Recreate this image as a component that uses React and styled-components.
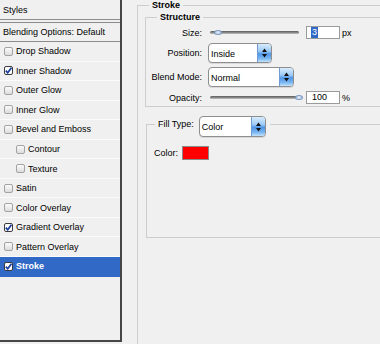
import React from 'react';
import styled, { createGlobalStyle } from 'styled-components';

const Global = createGlobalStyle`
  html, body { margin: 0; padding: 0; background: #f0f0f0; overflow: hidden; }
  body { font-family: "Liberation Sans", Arial, sans-serif; font-size: 9px; color: #000; }
  #root { width: 380px; height: 344px; overflow: hidden; }
`;

const Page = styled.div`
  display: flex;
  align-items: flex-start;
  width: 380px;
  height: 344px;
  overflow: hidden;
  background: #f0f0f0;
`;

/* ---------- left: styles list ---------- */
const StylesPanel = styled.div`
  flex: none;
  width: 120px;
  height: 340px;
  border-right: 2px solid #464646;
  border-bottom: 2px solid #464646;
  display: flex;
  flex-direction: column;
  background: #f0f0f0;
`;

const HeaderRow = styled.div`
  flex: none;
  display: flex;
  align-items: center;
  padding-left: 3px;
  height: ${p => (p.$first ? 19 : 18)}px;
  border-bottom: 1px solid #8c8c8c;
  border-top: ${p => (p.$first ? 'none' : '1px solid #8c8c8c')};
  margin-bottom: ${p => (p.$first ? 2 : 0)}px;
  white-space: nowrap;
`;

const LayerRow = styled.div`
  flex: none;
  box-sizing: border-box;
  height: 19.55px;
  display: flex;
  align-items: center;
  gap: 3px;
  padding-left: ${p => (p.$indent ? 16 : 4)}px;
  border-bottom: 1px solid ${p => (p.$selected ? '#3169c6' : '#fbfbfb')};
  background: ${p => (p.$selected ? '#3169c6' : 'transparent')};
  color: ${p => (p.$selected ? '#fff' : '#000')};
  font-weight: ${p => (p.$selected ? 'bold' : 'normal')};
  white-space: nowrap;
`;

const Box = styled.span`
  flex: none;
  box-sizing: border-box;
  width: 9px;
  height: 9px;
  border-radius: 2px;
  border: 1px solid ${p => (p.$checked ? '#3a3a3a' : '#a3a3a3')};
  background: ${p => (p.$checked ? '#fff' : 'linear-gradient(#fbfbfb, #dcdcdc)')};
  display: flex;
  align-items: center;
  justify-content: center;
`;

const CheckBox = ({ checked }) => (
  <Box $checked={checked}>
    {checked && (
      <svg width="7" height="7" viewBox="0 0 7 7">
        <path d="M0.8 3.6 L2.7 5.8 L6.4 0.8" fill="none" stroke="#1d3f9e" strokeWidth="1.7" />
      </svg>
    )}
  </Box>
);

/* ---------- right: stroke options ---------- */
const Group = styled.fieldset`
  box-sizing: border-box;
  min-inline-size: auto;
  border: 1px solid #cdcdcd;
  margin: 0;
  padding: 0;
`;

const StrokeGroup = styled(Group)`
  flex: none;
  margin-left: 15px;
  width: 300px;
  height: 420px;
  padding: 1px 0 0 7px;
`;

const StructureGroup = styled(Group)`
  padding: 3px 0 2px 0;
`;

const FillGroup = styled(Group)`
  margin: 9px 0 0 1px;
  padding: 14px 0 77px 7px;
`;

const Legend = styled.legend`
  padding: 0 3px;
  margin-left: ${p => p.$ml}px;
  line-height: 11px;
  font-weight: bold;
`;

const FillLegend = styled.legend`
  display: flex;
  align-items: flex-start;
  gap: 5px;
  padding: 0 4px 0 3px;
  margin-left: 1px;
`;

const FillLabel = styled.span`
  line-height: 16px;
`;

const FormGrid = styled.div`
  display: grid;
  grid-template-columns: 56px auto;
  grid-template-rows: 13px 20px 20px 13px;
  column-gap: 6px;
  row-gap: 4px;
  align-items: center;
`;

const Label = styled.span`
  text-align: right;
  white-space: nowrap;
`;

const Control = styled.div`
  display: flex;
  align-items: center;
  height: 100%;
`;

const Slider = styled.div`
  position: relative;
  flex: none;
  width: 89px;
  height: 13px;
  margin-left: 2px;
  margin-right: 7px;
  display: flex;
  align-items: center;
`;

const Track = styled.div`
  flex: 1;
  height: 3px;
  border-radius: 2px;
  background: linear-gradient(#5a5a5a, #8e8e8e 60%, #c4c4c4);
`;

const Thumb = styled.div`
  position: absolute;
  top: 4px;
  width: 8px;
  height: 5px;
  box-sizing: border-box;
  border-radius: 50%;
  border: 1px solid #7d96bd;
  background: radial-gradient(circle at 50% 35%, #f2f7fd, #a9c2e3 70%);
`;

const NumField = styled.div`
  flex: none;
  box-sizing: border-box;
  width: 34px;
  height: 13px;
  border: 1px solid #9b9b9b;
  background: #fff;
  padding-left: 5px;
  display: flex;
  align-items: center;
  line-height: 11px;
`;

const Selected = styled.span`
  background: #3169c6;
  color: #fff;
  padding: 0 1px;
  margin-left: -1px;
`;

const Unit = styled.span`
  margin-left: 2px;
`;

const SelectBox = styled.div`
  flex: none;
  display: flex;
  box-sizing: border-box;
  width: ${p => p.$w}px;
  height: ${p => p.$h}px;
  margin-bottom: ${p => p.$mb || 0}px;
  border: 1px solid #8e8e8e;
  border-radius: 4px;
  background: #fff;
  overflow: hidden;
  box-shadow: 0 1px 0 #d8d8d8;
`;

const SelectText = styled.span`
  flex: 1;
  padding-left: 2px;
  display: flex;
  align-items: center;
  padding-top: 1px;
  font-weight: normal;
`;

const SelectButton = styled.span`
  flex: none;
  width: 13px;
  border-left: 1px solid #6f9ad4;
  background: linear-gradient(#d9ecfd 0%, #9ccaf5 40%, #4f95e6 55%, #79b5f0 80%, #c3e3fb 100%);
  display: flex;
  align-items: center;
  justify-content: center;
`;

const Arrows = () => (
  <svg width="5" height="10" viewBox="0 0 5 10">
    <path d="M2.5 0.5 L5 4 L0 4 Z M0 6 L5 6 L2.5 9.5 Z" fill="#111" />
  </svg>
);

const Select = ({ value, w, h = 20, mb }) => (
  <SelectBox $w={w} $h={h} $mb={mb}>
    <SelectText>{value}</SelectText>
    <SelectButton>
      <Arrows />
    </SelectButton>
  </SelectBox>
);

const ColorRow = styled.div`
  display: flex;
  align-items: center;
  gap: 4px;
`;

const Swatch = styled.span`
  flex: none;
  box-sizing: border-box;
  width: 27px;
  height: 14px;
  border: 1px solid #8a8a8a;
  background: #ff0000;
`;

const layers = [
  { name: 'Drop Shadow' },
  { name: 'Inner Shadow', checked: true },
  { name: 'Outer Glow' },
  { name: 'Inner Glow' },
  { name: 'Bevel and Emboss' },
  { name: 'Contour', indent: true },
  { name: 'Texture', indent: true },
  { name: 'Satin' },
  { name: 'Color Overlay' },
  { name: 'Gradient Overlay', checked: true },
  { name: 'Pattern Overlay' },
  { name: 'Stroke', checked: true, selected: true },
];

const thumbLeft = frac => `${3 + frac * 82}px`;

export default function App() {
  return (
    <>
      <Global />
      <Page>
        <StylesPanel>
          <HeaderRow $first>Styles</HeaderRow>
          <HeaderRow>Blending Options: Default</HeaderRow>
          {layers.map(l => (
            <LayerRow key={l.name} $indent={l.indent} $selected={l.selected}>
              <CheckBox checked={l.checked} />
              {l.name}
            </LayerRow>
          ))}
        </StylesPanel>

        <StrokeGroup>
          <Legend $ml={4}>Stroke</Legend>
          <StructureGroup>
            <Legend $ml={11}>Structure</Legend>
            <FormGrid>
              <Label>Size:</Label>
              <Control>
                <Slider>
                  <Track />
                  <Thumb style={{ left: thumbLeft(3 / 250) }} />
                </Slider>
                <NumField>
                  <Selected>3</Selected>
                </NumField>
                <Unit>px</Unit>
              </Control>

              <Label>Position:</Label>
              <Control>
                <Select value="Inside" w={64} />
              </Control>

              <Label>Blend Mode:</Label>
              <Control>
                <Select value="Normal" w={86} />
              </Control>

              <Label>Opacity:</Label>
              <Control>
                <Slider>
                  <Track />
                  <Thumb style={{ left: thumbLeft(1) }} />
                </Slider>
                <NumField>100</NumField>
                <Unit>%</Unit>
              </Control>
            </FormGrid>
          </StructureGroup>

          <FillGroup>
            <FillLegend>
              <FillLabel>Fill Type:</FillLabel>
              <Select value="Color" w={67} h={21} mb={-5} />
            </FillLegend>
            <ColorRow>
              <span>Color:</span>
              <Swatch />
            </ColorRow>
          </FillGroup>
        </StrokeGroup>
      </Page>
    </>
  );
}
